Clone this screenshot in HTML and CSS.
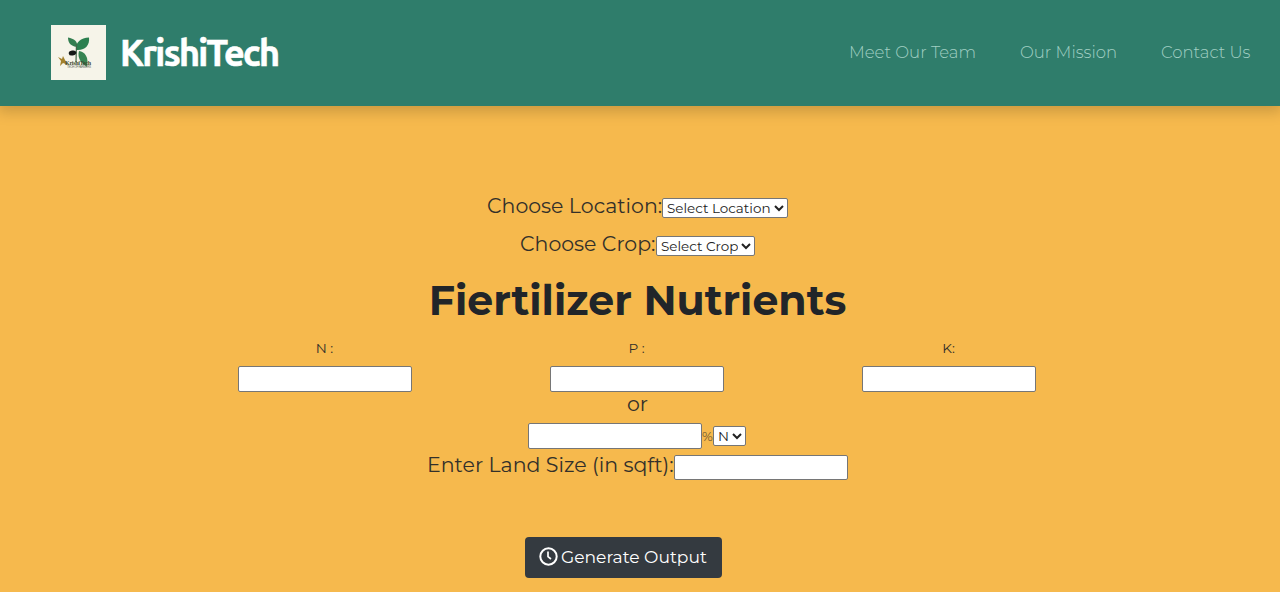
FILE: index.html
```html
<!DOCTYPE html>
<html lang="en">
<head>
<meta charset="utf-8">
<title>KrishiTech</title>
<link rel="stylesheet" href="styles.css">
</head>
<body>
<header class="navbar">
  <a class="brand">
    <svg class="logo" viewBox="0 0 55 55" width="55" height="55">
      <rect width="55" height="55" fill="#f6f4e9"/>
      <path d="M26 22C18 21 17 16 17 12.500C23 14 27 16 26 22Z" fill="#337e50"/>
      <path d="M25 25C24 17 30 13 38 12.500C39 20 34 26 25 25Z" fill="#2c8050"/>
      <path d="M28 26C34 27 38 32 36 42C30 38 26 33 28 26Z" fill="#378452"/>
      <path d="M25.500 19L25 37" stroke="#42674a" stroke-width="1.200" fill="none"/>
      <ellipse cx="21.500" cy="28" rx="3.800" ry="2.500" fill="#151917" transform="rotate(-10 21.500 28)"/>
      <path d="M7 32L11 34L12 31L14 35L17 40L12 38L9 41L10 36Z" fill="#a3812c"/>
      <text class="logo-name" x="14" y="39.500" textLength="26">KrishiTech</text>
      <text class="logo-tag" x="16" y="43" textLength="24">TECH OF FARMERS</text>
    </svg>
    <span class="brand-name">KrishiTech</span>
  </a>
  <nav class="links">
    <a class="team">Meet Our Team</a>
    <a class="mission">Our Mission</a>
    <a class="contact">Contact Us</a>
  </nav>
</header>
<main class="form">
  <div class="row location"><label class="label location-label">Choose Location:</label><select class="select location-select"><option>Select Location</option></select></div>
  <div class="row crop"><label class="label crop-label">Choose Crop:</label><select class="select crop-select"><option>Select Crop</option></select></div>
  <h1 class="title">Fiertilizer Nutrients</h1>
  <div class="nutrients">
    <div class="nutrient"><label class="small">N :</label><input class="input" type="text"></div>
    <div class="nutrient"><label class="small">P :</label><input class="input" type="text"></div>
    <div class="nutrient"><label class="small">K:</label><input class="input" type="text"></div>
  </div>
  <div class="label or">or</div>
  <div class="row percent"><input class="input" type="text"><span class="unit">%</span><select class="select unit-select"><option>N</option></select></div>
  <div class="row land"><label class="label land-label">Enter Land Size (in sqft):</label><input class="input land-input" type="text"></div>
  <button class="button" type="button">
    <svg width="19" height="19" viewBox="0 0 19 19" fill="none" stroke="#fff"><circle cx="9.500" cy="9.500" r="8.200" stroke-width="2"/><path d="M9 4.500V9.700L12 12" stroke-width="1.700"/></svg>
    <span class="button-text">Generate Output</span>
  </button>
</main>
</body>
</html>
```
FILE: styles.css
```css
* { box-sizing: border-box; }
body {
  margin: 0;
  height: 592px;
  overflow: hidden;
  background: #f6b94d;
  color: #212529;
  font-family: Montserrat, Inter, sans-serif;
  font-weight: 400;
}
.navbar {
  height: 106px;
  padding: 0 29px 1px 51px;
  display: flex;
  align-items: center;
  justify-content: space-between;
  background: #2f7d6b;
  box-shadow: 0 4px 13px 2px rgba(0, 0, 0, .17);
}
.brand { display: flex; align-items: center; gap: 14px; color: #fff; }
.logo { display: block; }
.logo-name { font: bold 6px "Liberation Serif", serif; fill: #3a4930; }
.logo-tag { font: 3px "Liberation Sans", sans-serif; fill: #687064; }
.brand-name {
  font: bold 36px/44px Ubuntu, "Noto Sans", sans-serif;
  letter-spacing: -1.7px;
  -webkit-text-stroke: .6px #fff;
  white-space: nowrap;
}
.links { display: flex; gap: 45px; padding-bottom: 1px; font-size: 16.500px; font-weight: 300; line-height: 20px; color: #a1cfc3; }
.links a { white-space: nowrap; }
.team { width: 126px; }
.mission { width: 96px; }
.contact { width: 90px; }
.form { width: 1275px; padding-top: 89px; display: flex; flex-direction: column; align-items: center; }
.row { display: flex; }
.label { font-size: 20.500px; line-height: 24px; white-space: nowrap; color: #33302a; }
.location { height: 38px; }
.crop { height: 38px; }
.location .label, .crop .label { margin-top: -1px; }
.location-label { width: 175px; }
.crop-label { width: 136px; }
.select {
  height: 20px;
  margin: 3px 0 0;
  padding: 0;
  border: 1px solid #767676;
  border-radius: 2px;
  background-color: #fff;
  color: #222;
  font: 400 13.500px Montserrat, Inter, sans-serif;
}
.location-select { width: 126px; }
.crop-select { width: 99px; }
.title { margin: 5px 0 0; font-size: 41px; line-height: 48px; font-weight: 700; white-space: nowrap; }
.nutrients { display: flex; margin-top: 16px; width: 936px; margin-right: 2px; }
.nutrient { width: 312px; display: flex; flex-direction: column; align-items: center; }
.small { font-size: 13.600px; line-height: 16px; margin-bottom: 10px; color: #33302a; }
.input {
  width: 174px;
  height: 26px;
  padding: 1px 2px;
  border: 1px solid #767676;
  border-radius: 2px;
  background: #fff;
}
.or { margin-top: 0; }
.percent { margin-top: 7px; margin-right: 1px; }
.unit { width: 11px; font-size: 13px; line-height: 26px; color: #6b5730; }
.unit-select { width: 33px; }
.land { height: 26px; margin-top: 6px; }
.land-label { width: 247px; margin-top: -2px; }
.land-input { height: 25px; }
.button {
  width: 197px;
  height: 41px;
  margin: 56px 28px 0 0;
  padding: 0 14px 2px;
  display: flex;
  align-items: center;
  gap: 3px;
  border: 0;
  border-radius: 4px;
  background: #343a40;
  color: #fff;
  font: 400 17.100px/24px Montserrat, Inter, sans-serif;
}
.button svg { flex: none; }
.button-text { white-space: nowrap; }
```
